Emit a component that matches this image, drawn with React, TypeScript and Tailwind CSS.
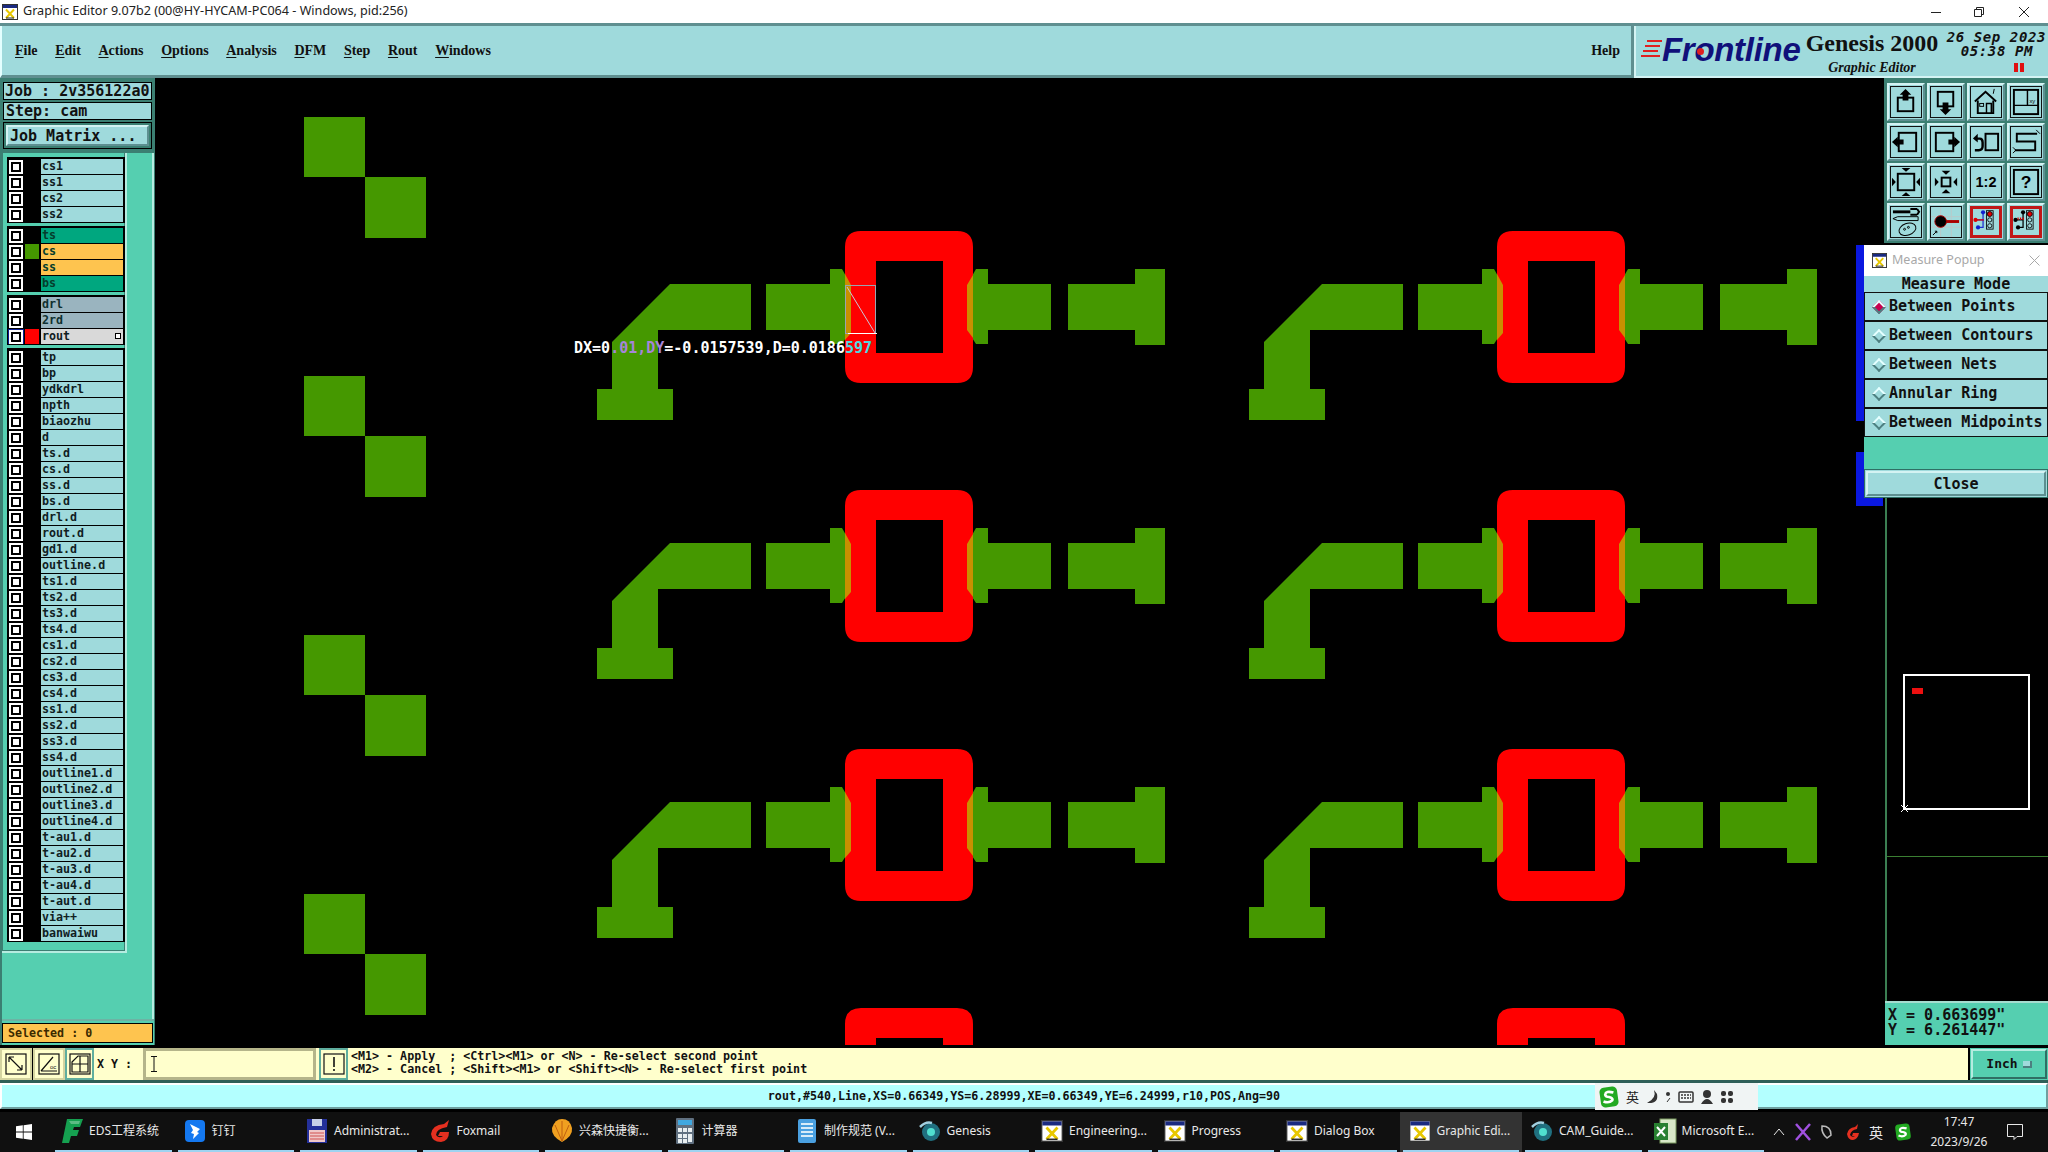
import { ReactNode } from 'react';

const mono = "font-['DejaVu_Sans_Mono',monospace] font-bold";
const serif = "font-['Liberation_Serif',serif]";
const bevel =
  'border-2 border-t-[#d4f3f3] border-l-[#d4f3f3] border-b-[#5d8f90] border-r-[#5d8f90]';

const GREEN = '#459800';

const groups: { name: string; bg?: string; swatch?: string; text?: string; active?: boolean }[][] = [
  [{ name: 'cs1' }, { name: 'ss1' }, { name: 'cs2' }, { name: 'ss2' }],
  [
    { name: 'ts', bg: 'bg-[#00a77f]', text: 'text-[#053d2c]' },
    { name: 'cs', bg: 'bg-[#fec44f]', swatch: 'bg-[#459800]', text: 'text-[#053d2c]' },
    { name: 'ss', bg: 'bg-[#fec44f]', text: 'text-[#053d2c]' },
    { name: 'bs', bg: 'bg-[#00a77f]', text: 'text-[#053d2c]' },
  ],
  [
    { name: 'drl', bg: 'bg-[#9ab4bf]', text: 'text-[#103030]' },
    { name: '2rd', bg: 'bg-[#9ab4bf]', text: 'text-[#103030]' },
    { name: 'rout', bg: 'bg-[#d9d9d9]', swatch: 'bg-[#ff0000]', active: true },
  ],
  'tp bp ydkdrl npth biaozhu d ts.d cs.d ss.d bs.d drl.d rout.d gd1.d outline.d ts1.d ts2.d ts3.d ts4.d cs1.d cs2.d cs3.d cs4.d ss1.d ss2.d ss3.d ss4.d outline1.d outline2.d outline3.d outline4.d t-au1.d t-au2.d t-au3.d t-au4.d t-aut.d via++ banwaiwu'
    .split(' ')
    .map((name) => ({ name })),
];

const menus = ['File', 'Edit', 'Actions', 'Options', 'Analysis', 'DFM', 'Step', 'Rout', 'Windows'];
const modes = ['Between Points', 'Between Contours', 'Between Nets', 'Annular Ring', 'Between Midpoints'];

const WinIcon = ({ size = 16 }: { size?: number }) => (
  <svg width={size} height={size} viewBox="0 0 16 16" className="shrink-0">
    <rect x="0.5" y="0.5" width="15" height="15" fill="#fff" stroke="#333" />
    <rect x="1" y="1" width="14" height="3" fill="#1a2a80" />
    <path d="M4 5.5 L12 14 M12 5.5 L4 14" stroke="#e8c800" strokeWidth="2" />
    <path d="M4 14 H12" stroke="#222" />
  </svg>
);

const Check = ({ active }: { active?: boolean }) => (
  <div className={`w-[16px] h-[15px] flex items-center justify-center shrink-0 ${active ? 'bg-[#0a1a90]' : ''}`}>
    <div className="w-[14px] h-[14px] bg-white flex items-center justify-center">
      <div className="w-[10px] h-[10px] border-2 border-black bg-white" />
    </div>
  </div>
);

const LayerRow = ({ row }: { row: (typeof groups)[number][number] }) => (
  <div className="flex h-[16px] items-start pl-[1px]">
    <Check active={row.active} />
    <div className={`w-[14px] h-[15px] ml-[1px] shrink-0 ${row.swatch ?? ''}`} />
    <div
      className={`relative w-[82px] h-[15px] ml-[2px] pl-[1px] text-[11.67px] leading-[14px] ${mono} ${row.bg ?? 'bg-[#9fdadc]'} ${row.text ?? 'text-[#10201f]'}`}
    >
      {row.name}
      {row.active && (
        <div className="absolute right-[2px] top-[4px] w-[6px] h-[6px] border border-black bg-white" />
      )}
    </div>
  </div>
);

const LeftPanel = () => (
  <div className="w-[155px] h-full flex flex-col bg-[#3b7f72] shrink-0">
    <div className="px-[3px] pt-[4px] flex flex-col gap-[2px]">
      <div className={`h-[18px] border border-black bg-[#9fdadc] pl-[1px] text-[15px] leading-[17px] text-[#111] ${mono}`}>
        Job : 2v356122a0
      </div>
      <div className={`h-[18px] border border-black bg-[#9fdadc] pl-[2px] text-[15px] leading-[17px] text-[#111] ${mono}`}>
        Step: cam
      </div>
      <div className="h-[27px] border border-black p-[2px]">
        <div className={`h-[21px] bg-[#9fdadc] pl-[2px] text-[15px] leading-[18px] text-[#111] ${bevel} ${mono}`}>
          Job Matrix ...
        </div>
      </div>
    </div>
    <div className="mt-[3px] flex-1 flex flex-col ml-[2px] mr-[1px] bg-[#55cfb0] border-t border-[#3b7f72]">
      <div className="flex flex-1">
        <div className="w-[125px] h-[800px] border-r-2 border-b-2 border-[#b5ece0] bg-[#3b7f72]">
          <div className="w-[121px] h-[797px] bg-[#55cfb0] pt-[4px] pl-[4px] flex flex-col gap-[3px] ml-[1px]">
            {groups.map((g, i) => (
              <div key={i} className="bg-black w-[118px] pt-[2px]">
                {g.map((row) => (
                  <LayerRow key={row.name} row={row} />
                ))}
              </div>
            ))}
          </div>
        </div>
        <div className="flex-1 border-r-2 border-[#b5ece0]" />
      </div>
      <div className="h-[26px] border-t-2 border-[#6db3a4] bg-[#55cfb0] pt-[2px] pr-[1px]">
        <div className={`h-[20px] border border-black bg-[#fec44f] pl-[5px] text-[#3a2a00] text-[11.67px] leading-[18px] ${mono}`}>
          Selected : 0
        </div>
      </div>
    </div>
  </div>
);

const Cell = ({ x, y }: { x: number; y: number }) => (
  <g transform={`translate(${x} ${y})`}>
    <path
      fill={GREEN}
      d="M670 284 H751 V330 H658 V389 H673 V420 H597 V389 H612 V342 Z"
    />
    <path fill={GREEN} d="M766 284 H830 V269 H842 L851 285 V330 L842 344 H830 V330 H766 Z" />
    <path fill={GREEN} d="M967 285 L976 269 H988 V284 H1051 V330 H988 V344 H976 L967 330 Z" />
    <path fill={GREEN} d="M1068 284 H1135 V269 H1165 V345 H1135 V330 H1068 Z" />
    <path
      fill="#ff0000"
      fillRule="evenodd"
      d="M861 231 H957 Q973 231 973 247 V367 Q973 383 957 383 H861 Q845 383 845 367 V247 Q845 231 861 231 Z M876 261 V353 H943 V261 Z"
    />
    <path fill="#c89000" d="M845 274 L851 285 V333 L845 340 Z" />
    <path fill="#c89000" d="M973 275 L967 285 V330 L973 338 Z" />
  </g>
);

const Canvas = () => (
  <div className="flex-1 h-full bg-black">
    <svg width="1701" height="967" viewBox="155 78 1701 967" className="block">
      {[0, 259, 518, 777].map((dy) => (
        <g key={dy}>
          <rect x="304" y={117 + dy} width="61" height="60" fill={GREEN} />
          <rect x="365" y={177 + dy} width="61" height="61" fill={GREEN} />
          <Cell x={0} y={dy} />
          <Cell x={652} y={dy} />
        </g>
      ))}
      <rect x="845.5" y="285.5" width="30" height="48" fill="none" stroke="#9aa4b0" />
      <path d="M847 287 L875 333" stroke="#c8c8d8" />
      <path d="M848 333.5 H877" stroke="#fff" />
      <text
        x="574"
        y="353"
        fill="#fff"
        fontFamily="DejaVu Sans Mono"
        fontWeight="700"
        fontSize="15"
      >
        DX=0<tspan fill="#a585d8">.01,DY</tspan>=-0.0157539,D=0.0186<tspan fill="#50d8e0">597</tspan>
      </text>
    </svg>
  </div>
);

const Tool = ({ children, red }: { children: ReactNode; red?: boolean }) => (
  <div className={`w-[38px] h-[38px] bg-[#9fdadc] p-[1px] ${bevel}`}>
    <div className={`w-[32px] h-[32px] border ${red ? 'border-[3px] border-[#c01818]' : 'border-[#111]'}`}>
      <svg width="100%" height="100%" viewBox="0 0 31 31" fill="none" stroke="#000" strokeWidth="2">
        {children}
      </svg>
    </div>
  </div>
);

const tools: { red?: boolean; icon: ReactNode }[] = [
  { icon: <><rect x="7" y="11" width="16" height="14" /><path d="M15 2 L21 8 H18 V14 H12 V8 H9 Z" fill="#000" stroke="none" /></> },
  { icon: <><rect x="7" y="5" width="16" height="15" /><path d="M15 29 L9 23 H12 V16 H18 V23 H21 Z" fill="#000" stroke="none" /></> },
  { icon: <><path d="M4 15 L15 5 L26 15" /><path d="M7 14 V27 H23 V14" /><rect x="9" y="17" width="4" height="3" strokeWidth="1" /><path d="M16 27 V17 H21 V27" strokeWidth="1.5" /><path d="M23 7 L24 2" strokeWidth="1" /></> },
  { icon: <><rect x="3" y="3" width="25" height="25" /><path d="M3 19 H28 M17 3 V19" strokeWidth="1.5" /><text x="19" y="17" fontSize="6" fill="#000" stroke="none" fontFamily="Liberation Sans">xy</text></> },
  { icon: <><rect x="8" y="6" width="18" height="19" /><path d="M1 15.5 L7 10 V13 H13 V18 H7 V21 Z" fill="#000" stroke="none" /></> },
  { icon: <><rect x="5" y="6" width="18" height="19" /><path d="M30 15.5 L24 10 V13 H18 V18 H24 V21 Z" fill="#000" stroke="none" /></> },
  { icon: <><rect x="15" y="7" width="13" height="17" /><path d="M5 12 H9 Q12 12 12 16 V20 Q12 24 8 24 H4" strokeWidth="2.5" /><path d="M2 12 L7 7 V16 Z" fill="#000" stroke="none" /></> },
  { icon: <><path d="M27 7 H6 V15 H25 V24 H4" /><path d="M26 3 L30 7 M2 21 L5 24 L2 27" strokeWidth="1" /></> },
  { icon: <><rect x="7" y="7" width="17" height="17" /><path d="M15.5 5 L11 1 H20 Z M15.5 26 L11 30 H20 Z M5 15.5 L1 11 V20 Z M26 15.5 L30 11 V20 Z" fill="#000" stroke="none" /></> },
  { icon: <><rect x="11" y="11" width="9" height="9" /><path d="M15.5 8 L11 4 H20 Z M15.5 23 L11 27 H20 Z M8 15.5 L4 11 V20 Z M23 15.5 L27 11 V20 Z" fill="#000" stroke="none" /></> },
  { icon: <text x="15.5" y="21" textAnchor="middle" fontSize="15" fontWeight="700" fill="#000" stroke="none" fontFamily="Liberation Sans">1:2</text> },
  { icon: <><rect x="3" y="3" width="25" height="25" /><text x="15.5" y="22" textAnchor="middle" fontSize="18" fontWeight="700" fill="#000" stroke="none" fontFamily="Liberation Sans">?</text></> },
  { icon: <><path d="M2 5 H20" strokeWidth="3" /><path d="M20 2 H27 M20 8 H27 M27 2 L29 5 L27 8" strokeWidth="2" /><path d="M2 12 L7 10 H28 V14 H7 Z" strokeWidth="1" /><ellipse cx="17" cy="23" rx="9" ry="6" strokeWidth="1" transform="rotate(-20 17 23)" /><circle cx="14" cy="23" r="1" strokeWidth="1" /><circle cx="18" cy="21" r="1" strokeWidth="1" /></> },
  { icon: <><path d="M0 10 H31 M0 21 H31 M10 0 V31 M21 0 V31" stroke="#b9c9c9" strokeWidth="1" /><path d="M14 15 H29" stroke="#a00" strokeWidth="3" /><circle cx="10" cy="15" r="6" fill="#000" stroke="#a00" strokeWidth="1" /><path d="M2 29 L6 25 M4 25 H6 V27" strokeWidth="1" /></> },
  {
    red: true,
    icon: <><path d="M4 13 H13 M12 5 V22 H7" stroke="#2030d0" strokeWidth="1.5" /><path d="M4 13 H13" stroke="#e00000" strokeWidth="1.5" /><circle cx="3" cy="13" r="2.5" fill="#e00000" stroke="none" /><circle cx="12" cy="4" r="2.5" fill="#1020d0" stroke="none" /><circle cx="6" cy="22" r="2.5" fill="#1020d0" stroke="none" /><rect x="16" y="2" width="8" height="22" strokeWidth="1" /><circle cx="20" cy="6" r="3" fill="#e00000" stroke="#000" strokeWidth="1" /><circle cx="20" cy="13" r="2.5" strokeWidth="1" /><circle cx="20" cy="20" r="2.5" strokeWidth="1" /></>,
  },
  {
    red: true,
    icon: <><path d="M3 13 H12 M12 4 V22 H6" strokeWidth="1.5" /><path d="M6 10 V13 M9 10 V13 M12 10 V13" stroke="#e00000" strokeWidth="1.5" /><circle cx="3" cy="13" r="2.5" fill="#000" stroke="none" /><circle cx="12" cy="4" r="2.5" fill="#000" stroke="none" /><circle cx="6" cy="22" r="2.5" fill="#000" stroke="none" /><rect x="16" y="2" width="8" height="22" strokeWidth="1" /><circle cx="20" cy="6" r="3" fill="#e00000" stroke="#000" strokeWidth="1" /><circle cx="20" cy="13" r="2.5" strokeWidth="1" /><circle cx="20" cy="20" r="2.5" strokeWidth="1" /></>,
  },
];

const MeasurePopup = () => (
  <div className="w-[184px] h-[253px] flex flex-col bg-[#111] shrink-0">
    <div className="h-[31px] shrink-0 bg-white flex items-center pl-[8px] pr-[4px]">
      <WinIcon size={15} />
      <span className="ml-[5px] text-[12.5px] text-[#a8a8a8] font-['Noto_Sans',sans-serif]">Measure Popup</span>
      <svg className="ml-auto mr-[4px]" width="11" height="11" viewBox="0 0 11 11" stroke="#a8a8a8">
        <path d="M0.5 0.5 L10.5 10.5 M10.5 0.5 L0.5 10.5" />
      </svg>
    </div>
    <div className={`h-[16px] shrink-0 bg-[#9fdadc] text-center text-[#111] text-[15px] leading-[16px] ${mono}`}>Measure Mode</div>
    {modes.map((m, i) => (
      <div key={m} className={`h-[29px] shrink-0 bg-[#9fdadc] border-[1.5px] border-[#111] flex items-center pl-[9px] text-[#111] text-[15px] whitespace-nowrap ${mono}`}>
        <div
          className={`w-[10px] h-[10px] shrink-0 rotate-45 border-2 border-t-[#e5ffff] border-l-[#e5ffff] border-b-[#4d7f80] border-r-[#4d7f80] mr-[5px] ${i === 0 ? 'bg-[#c8004f]' : 'bg-[#9fdadc]'}`}
        />
        {m}
      </div>
    ))}
    <div className="flex-1 bg-[#55cfb0]" />
    <div className="h-[29px] shrink-0 border border-[#2f6f64] bg-[#9fdadc] p-[1px]">
      <div className={`h-full text-center text-[#111] text-[15px] leading-[22px] ${bevel} ${mono}`}>Close</div>
    </div>
  </div>
);

const RightPanel = () => (
  <div className="w-[192px] h-full flex flex-col bg-black shrink-0">
    <div className="h-[167px] shrink-0 flex flex-col">
      <div className="h-[165px] ml-[28px] bg-[#3b7f72] pl-[3px] pt-[5px]">
        <div className="grid grid-cols-[repeat(4,38px)] gap-x-[2px] gap-y-[2px]">
          {tools.map((t, i) => (
            <Tool key={i} red={t.red}>
              {t.icon}
            </Tool>
          ))}
        </div>
      </div>
    </div>
    <div className="flex h-[253px] shrink-0">
      <div className="w-[8px] shrink-0 flex flex-col">
        <div className="h-[176px] bg-[#0a18e0]" />
        <div className="h-[31px]" />
        <div className="flex-1 bg-[#0a18e0]" />
      </div>
      <MeasurePopup />
    </div>
    <div className="flex flex-1 min-h-0">
      <div className="w-[29px] shrink-0">
        <div className="w-[27px] h-[8px] bg-[#0a18e0]" />
      </div>
      <div className="flex-1 flex flex-col">
        <div className="h-[503px] shrink-0 flex flex-col border-l-2 border-[#3b7f52]">
          <div className="h-[359px] border-b border-[#3b7f32] pt-[176px] pl-[16px]">
            <div className="relative w-[127px] h-[136px] border-2 border-white pt-[12px] pl-[7px]">
              <div className="w-[11px] h-[6px] bg-[#ee1010]" />
              <svg className="absolute left-[-5px] bottom-[-5px]" width="9" height="9" viewBox="0 0 9 9" stroke="#fff">
                <path d="M1 1 L8 8 M8 1 L1 8" />
              </svg>
            </div>
          </div>
          <div className="flex-1" />
        </div>
        <div className={`h-[44px] shrink-0 border-t-2 border-[#a5dccf] bg-[#55cfb0] pl-[3px] pt-[5px] text-[15px] leading-[15px] text-[#111] ${mono}`}>
          <div>X = 0.663699"</div>
          <div>Y = 6.261447"</div>
        </div>
      </div>
    </div>
  </div>
);

const CmdIcon = ({ children, w, teal }: { children: ReactNode; w: string; teal?: boolean }) => (
  <div
    className={`${w} h-full flex items-center justify-center shrink-0 bg-[#ffffcc] border-2 ${teal ? 'border-[#5fae9e]' : 'border-[#d4d4a0]'}`}
  >
    <svg width="22" height="22" viewBox="0 0 22 22" fill="none" stroke="#111" strokeWidth="1.2">
      <rect x="1" y="1" width="20" height="20" />
      {children}
    </svg>
  </div>
);

const CommandBar = () => (
  <div className="h-[32px] flex bg-[#ffffcc] text-[#111]">
    <CmdIcon w="w-[32px]">
      <path d="M4 4 L17 17 M4 4 V9 M4 4 H9 M17 17 V12 M17 17 H12" />
    </CmdIcon>
    <div className="w-[1px] bg-black" />
    <CmdIcon w="w-[32px]">
      <path d="M3 18 L15 4 M3 18 H19" />
      <text x="12" y="16" fontSize="6" fill="#111" stroke="none" fontFamily="Liberation Sans">oc</text>
    </CmdIcon>
    <CmdIcon w="w-[29px]" teal>
      <path d="M3 9 L9 3 H19 V19 H3 Z M3 11 H19 M11 3 V19" />
    </CmdIcon>
    <div className={`w-[49px] shrink-0 pl-[3px] text-[11.67px] leading-[32px] ${mono}`}>X Y :</div>
    <div className="w-[173px] shrink-0 border-[3px] border-[#b5b58a] pl-[5px] flex items-center">
      <svg width="6" height="16" viewBox="0 0 6 16" stroke="#111">
        <path d="M0 0.5 H6 M3 0 V16 M0 15.5 H6" />
      </svg>
    </div>
    <CmdIcon w="w-[29px] ml-[3px]" teal>
      <path d="M11 4 V14 M11 16 V18" strokeWidth="1.6" />
    </CmdIcon>
    <div className={`flex-1 pl-[3px] pt-[2px] text-[11.67px] leading-[13px] whitespace-pre ${mono}`}>
      <div>{'<M1> - Apply  ; <Ctrl><M1> or <N> - Re-select second point'}</div>
      <div>{'<M2> - Cancel ; <Shift><M1> or <Shift><N> - Re-select first point'}</div>
    </div>
    <div className="w-[80px] shrink-0 border-l-2 border-black p-[1px] bg-[#55cfb0]">
      <div className={`h-full flex items-center justify-center gap-[5px] text-[13px] border-2 border-t-[#b5ece0] border-l-[#b5ece0] border-b-[#2f6f64] border-r-[#2f6f64] bg-[#55cfb0] ${mono}`}>
        Inch
        <div className="w-[9px] h-[7px] bg-[#9fdadc] border-b-2 border-r-2 border-[#4d7f80]" />
      </div>
    </div>
  </div>
);

const SGreen = ({ size }: { size: number }) => (
  <svg width={size} height={size} viewBox="0 0 20 20" className="shrink-0">
    <rect x="2" y="1" width="16" height="18" rx="4" fill="#22aa22" transform="rotate(-8 10 10)" />
    <path d="M14 6 Q7 4 6.5 8 Q7 10 10 10 Q14 11 13 13 Q10 16 5 14" fill="none" stroke="#fff" strokeWidth="2.4" />
  </svg>
);

const StatusBar = () => (
  <div className="relative h-[29px] bg-[#2f5f58] pt-[3px]">
    <div className={`h-[26px] bg-[#b3ffff] border-2 border-t-[#ffffff] border-b-[#6f9f9f] border-l-[#ffffff] border-r-[#6f9f9f] text-center text-[11.67px] leading-[22px] text-[#111] ${mono}`}>
      rout,#540,Line,XS=0.66349,YS=6.28999,XE=0.66349,YE=6.24999,r10,POS,Ang=90
    </div>
    <div className="absolute left-[1595px] top-[3px] w-[163px] h-[27px] bg-[#f0f4f4] flex items-center pl-[3px] gap-[6px]">
      <SGreen size={22} />
      <span className="text-[13px] text-[#222] font-['Noto_Sans_CJK_SC',sans-serif]">英</span>
      <svg width="14" height="16" viewBox="0 0 14 16" fill="#333"><path d="M9 1 Q12 9 2 14 Q14 15 12 5 Z" /></svg>
      <svg width="7" height="14" viewBox="0 0 7 14" fill="#333"><circle cx="3" cy="4" r="2" /><path d="M5 8 L2 12" stroke="#333" /></svg>
      <svg width="16" height="14" viewBox="0 0 16 14" fill="none" stroke="#333" strokeWidth="1.5"><rect x="1" y="2" width="14" height="10" rx="1" /><path d="M3 5 H13 M3 8 H13" strokeDasharray="2 1" /></svg>
      <svg width="14" height="16" viewBox="0 0 14 16" fill="#333"><circle cx="7" cy="5" r="4" /><path d="M1 15 Q7 5 13 15 Z" /></svg>
      <svg width="14" height="14" viewBox="0 0 14 14" fill="#333"><rect x="1" y="1" width="5" height="5" rx="2" /><rect x="8" y="1" width="5" height="5" rx="2" /><rect x="1" y="8" width="5" height="5" rx="2" /><rect x="8" y="8" width="5" height="5" rx="2" /></svg>
    </div>
  </div>
);

const taskIcons: Record<string, ReactNode> = {
  eds: (
    <svg width="24" height="26" viewBox="0 0 24 26">
      <path d="M7 1 H23 L20 9 H14 L13 12 H19 L17 18 H11 L9 25 H2 Z" fill="#15a050" />
      <path d="M9 3 H20 L19 6 H11 Z" fill="#fff" opacity="0.3" />
    </svg>
  ),
  ding: (
    <svg width="22" height="24" viewBox="0 0 22 24">
      <rect x="1" y="1" width="20" height="22" rx="4" fill="#1478f0" />
      <path d="M6 5 L16 10 L13 13 L15 14 L9 20 L10 15 L7 14 L9 11 Z" fill="#fff" />
    </svg>
  ),
  floppy: (
    <svg width="22" height="26" viewBox="0 0 22 26">
      <rect x="1" y="1" width="20" height="24" fill="#24309a" />
      <rect x="6" y="1" width="10" height="7" fill="#c8d0e8" />
      <rect x="3" y="12" width="16" height="12" fill="#f0c8c8" />
      <path d="M4 15 H18 M4 18 H18 M4 21 H18" stroke="#d05050" />
    </svg>
  ),
  fox: (
    <svg width="24" height="24" viewBox="0 0 24 24">
      <path d="M21 1 L16 5 Q4 6 3 15 Q4 23 13 23 Q21 22 21 13 L12 13 L10 17 L15 17 Q11 20 8 16 Q8 10 19 8 Z" fill="#e53020" />
    </svg>
  ),
  shell: (
    <svg width="24" height="26" viewBox="0 0 24 26">
      <path d="M12 24 Q1 18 2 10 Q5 1 12 1 Q20 1 22 10 Q23 18 12 24 Z" fill="#f0a020" />
      <path d="M12 23 L5 7 M12 23 L12 3 M12 23 L19 7" stroke="#c06010" />
    </svg>
  ),
  calc: (
    <svg width="20" height="28" viewBox="0 0 20 28">
      <rect x="1" y="1" width="18" height="26" rx="1" fill="#607080" />
      <rect x="3" y="3" width="14" height="5" fill="#40a8e0" />
      <path d="M3 11 H7 V15 H3 Z M8 11 H12 V15 H8 Z M13 11 H17 V15 H13 Z M3 17 H7 V21 H3 Z M8 17 H12 V21 H8 Z M13 17 H17 V25 H13 Z M3 22 H7 V26 H3 Z M8 22 H12 V26 H8 Z" fill="#e8eef0" />
    </svg>
  ),
  doc: (
    <svg width="20" height="26" viewBox="0 0 20 26">
      <rect x="1" y="1" width="18" height="24" rx="2" fill="#4aa0e0" />
      <path d="M4 6 H16 M4 10 H16 M4 14 H16 M4 18 H16" stroke="#d8ecf8" strokeWidth="2" />
    </svg>
  ),
  gen: (
    <svg width="24" height="24" viewBox="0 0 24 24">
      <circle cx="13" cy="13" r="9" fill="#207080" />
      <circle cx="13" cy="13" r="4" fill="#50e0d0" />
      <path d="M2 8 Q8 2 14 4" stroke="#a0d0e0" strokeWidth="2.5" fill="none" />
    </svg>
  ),
  win: <WinIcon size={22} />,
  xls: (
    <svg width="24" height="26" viewBox="0 0 24 26">
      <rect x="7" y="1" width="16" height="24" fill="#d8e8c8" stroke="#7a9a60" />
      <rect x="1" y="5" width="14" height="17" fill="#288030" />
      <path d="M4 9 L12 18 M12 9 L4 18" stroke="#fff" strokeWidth="2" />
    </svg>
  ),
};

const taskItems = [
  { icon: 'eds', label: 'EDS工程系统' },
  { icon: 'ding', label: '钉钉' },
  { icon: 'floppy', label: 'Administrat...' },
  { icon: 'fox', label: 'Foxmail' },
  { icon: 'shell', label: '兴森快捷衡...' },
  { icon: 'calc', label: '计算器' },
  { icon: 'doc', label: '制作规范 (V...' },
  { icon: 'gen', label: 'Genesis' },
  { icon: 'win', label: 'Engineering...' },
  { icon: 'win', label: 'Progress' },
  { icon: 'win', label: 'Dialog Box' },
  { icon: 'win', label: 'Graphic Edi...', active: true },
  { icon: 'gen', label: 'CAM_Guide...' },
  { icon: 'xls', label: 'Microsoft E...' },
];

const Taskbar = () => (
  <div className="h-[40px] mt-[3px] bg-[#101010] flex text-[12px] text-[#e8e8e8] font-['Noto_Sans','Noto_Sans_CJK_SC',sans-serif]">
    <div className="w-[52px] flex items-center justify-center pr-[4px] shrink-0">
      <svg width="16" height="16" viewBox="0 0 16 16" fill="#fff">
        <path d="M0 2.3 L6.8 1.3 V7.6 H0 Z M7.6 1.2 L16 0 V7.6 H7.6 Z M0 8.4 H6.8 V14.7 L0 13.7 Z M7.6 8.4 H16 V16 L7.6 14.8 Z" />
      </svg>
    </div>
    {taskItems.map((t) => (
      <div key={t.label} className={`w-[122.5px] shrink-0 flex flex-col ${t.active ? 'bg-[#333333]' : ''}`}>
        <div className="flex-1 flex items-center gap-[5px] pl-[8px] whitespace-nowrap overflow-hidden">
          <span className="w-[24px] flex justify-center shrink-0">{taskIcons[t.icon]}</span>
          {t.label}
        </div>
        <div className="h-[2px] mx-[3px] bg-[#9ed3f0]" />
      </div>
    ))}
    <div className="flex-1 flex items-center pl-[6px]">
      <svg width="12" height="8" viewBox="0 0 12 8" fill="none" stroke="#e8e8e8"><path d="M1 7 L6 1 L11 7" /></svg>
      <svg className="ml-[10px]" width="16" height="18" viewBox="0 0 16 18" fill="none" stroke="#a050e0" strokeWidth="2.5"><path d="M1 1 L15 17 M15 1 L1 17" /></svg>
      <svg className="ml-[8px]" width="16" height="18" viewBox="0 0 16 18" fill="none" stroke="#bbb" strokeWidth="1.5"><path d="M3 3 Q12 3 12 12 L8 15 Q2 10 3 3 Z" /></svg>
      <svg className="ml-[11px]" width="14" height="18" viewBox="0 0 14 18"><path d="M12 1 L9 4 Q2 5 1 11 Q2 17 7 17 Q12 16 13 10 L7 10 L6 13 L9 13 Q6 15 4 12 Q5 7 11 6 Z" fill="#e53020" /></svg>
      <span className="ml-[9px] text-[14px] font-['Noto_Sans_CJK_SC',sans-serif]">英</span>
      <span className="ml-[11px]"><SGreen size={18} /></span>
      <div className="ml-[14px] w-[66px] text-center text-[12px] leading-[20px] flex flex-col">
        <span>17:47</span>
        <span>2023/9/26</span>
      </div>
      <svg className="ml-[14px]" width="18" height="18" viewBox="0 0 18 18" fill="none" stroke="#e8e8e8"><path d="M1.5 1.5 H16.5 V13.5 H11 L8 16.5 V13.5 H1.5 Z" /></svg>
    </div>
  </div>
);

const Header = () => (
  <div className="h-[55px] flex bg-[#9fdadc] border-t-[3px] border-[#5f8f90]">
    <div className={`w-[1634px] shrink-0 h-full flex items-center pl-[13px] gap-[17.6px] border-l-2 border-b-[3px] border-r-[3px] border-l-[#e4ffff] border-b-[#5f8f90] border-r-[#5f8f90] text-[14px] text-[#111] font-bold ${serif}`}>
      {menus.map((m) => (
        <span key={m}>
          <span className="underline underline-offset-2">{m[0]}</span>
          {m.slice(1)}
        </span>
      ))}
      <span className="ml-auto mr-[11px]">Help</span>
    </div>
    <div className="flex-1 flex border-b-2 border-l-2 border-[#d4f3f3]">
      <svg className="mt-[12px] ml-[5px] shrink-0" width="21" height="24" viewBox="0 0 21 24" stroke="#e02020" strokeWidth="2">
        <path d="M6 3 H21 M4 8 H19 M2 13 H17 M0 18 H19" />
      </svg>
      <div className="relative mt-[4px] w-[138px] shrink-0 italic font-bold text-[33px] leading-[40px] text-[#10107a] font-['Liberation_Sans',sans-serif] tracking-[-0.3px] whitespace-nowrap">
        Frontline
        <div className="absolute left-[35px] top-[18px] w-[7px] h-[7px] rounded-full bg-[#e02020]" />
      </div>
      <div className={`ml-[4px] w-[136px] shrink-0 flex flex-col items-center text-[#111] ${serif}`}>
        <div className="text-[24px] leading-[28px] mt-[3px] font-bold whitespace-nowrap">Genesis 2000</div>
        <div className="text-[14px] leading-[16px] mt-[3px] font-bold italic">Graphic Editor</div>
      </div>
      <div className={`flex-1 flex flex-col items-end pr-[2px] pt-[4px] text-[#111] italic text-[14px] leading-[14px] whitespace-pre tracking-[0.6px] ${mono}`}>
        <div>26 Sep 2023</div>
        <div className="mr-[13px]">05:38 PM</div>
        <div className="flex gap-[2px] mr-[22px] mt-[5px]">
          <div className="w-[4px] h-[9px] bg-[#e01010]" />
          <div className="w-[4px] h-[9px] bg-[#e01010]" />
        </div>
      </div>
    </div>
  </div>
);

export default function App() {
  return (
    <div className="w-[2048px] h-[1152px] flex flex-col overflow-hidden bg-black">
      <div className="h-[23px] bg-white flex items-center pl-[2px] shrink-0">
        <WinIcon size={16} />
        <span className="ml-[5px] text-[12.6px] text-[#222] font-['Noto_Sans',sans-serif]">
          Graphic Editor 9.07b2 (00@HY-HYCAM-PC064 - Windows, pid:256)
        </span>
        <div className="ml-auto flex items-center">
          <svg width="12" height="12" viewBox="0 0 12 12" stroke="#222" className="mr-[31px]"><path d="M1 6.5 H11" /></svg>
          <svg width="12" height="12" viewBox="0 0 12 12" stroke="#222" fill="none" className="mr-[33px]"><path d="M1.5 3.5 H8.5 V10.5 H1.5 Z M3.5 3 V1.5 H10.5 V8.5 H9" /></svg>
          <svg width="12" height="12" viewBox="0 0 12 12" stroke="#222" className="mr-[18px]"><path d="M1 1 L11 11 M11 1 L1 11" /></svg>
        </div>
      </div>
      <Header />
      <div className="h-[967px] flex">
        <LeftPanel />
        <Canvas />
        <RightPanel />
      </div>
      <div className="h-[3px]" />
      <CommandBar />
      <StatusBar />
      <Taskbar />
    </div>
  );
}
